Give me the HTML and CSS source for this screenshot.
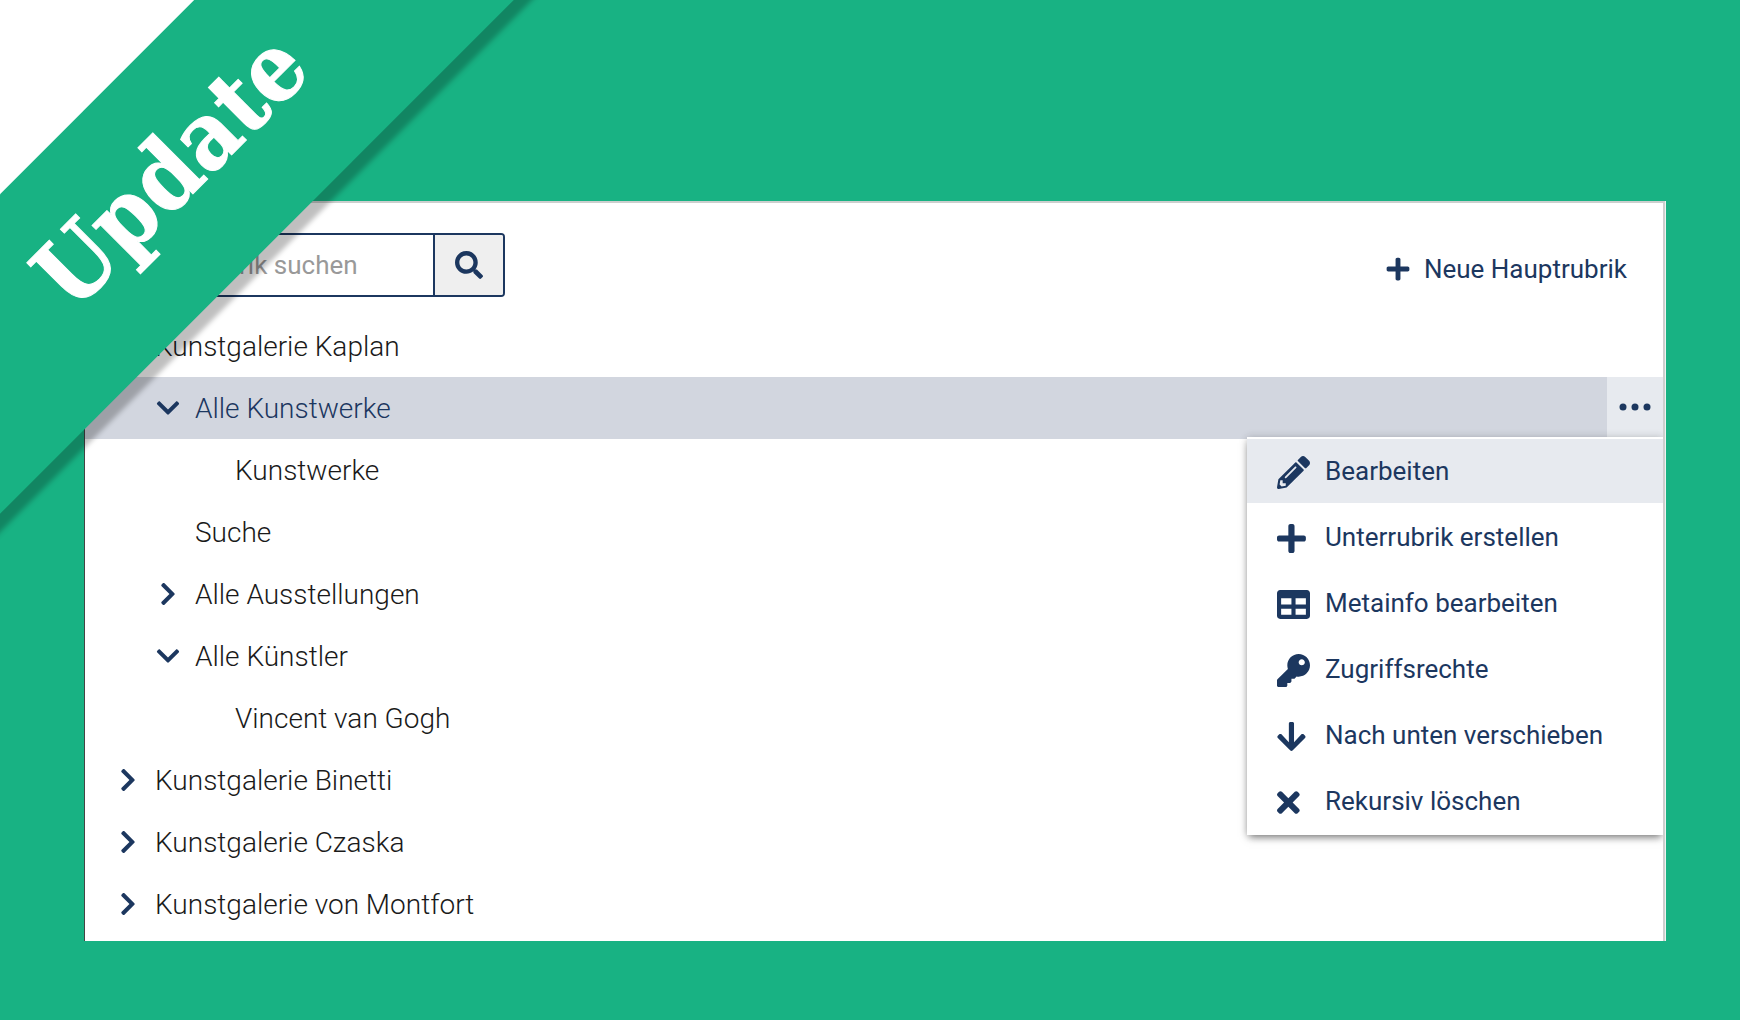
FILE: index.html
```
<!DOCTYPE html>
<html lang="de">
<head>
    <meta charset="UTF-8">
    <meta name="viewport" content="width=device-width, initial-scale=1.0">
    <title>Rubriken</title>
    <link rel="stylesheet" href="styles.css">
</head>
<body>
    <!-- shared icons -->
    <svg class="sprite" aria-hidden="true">
        <symbol id="down" viewBox="0 0 448 512"><path d="M207.029 381.476L12.686 187.132c-9.373-9.373-9.373-24.569 0-33.941l22.667-22.667c9.357-9.357 24.522-9.375 33.901-.04L224 284.505l154.745-154.021c9.379-9.335 24.544-9.317 33.901.04l22.667 22.667c9.373 9.373 9.373 24.569 0 33.941L240.971 381.476c-9.373 9.372-24.569 9.372-33.942 0z"/></symbol>
        <symbol id="right" viewBox="0 0 320 512"><path d="M285.476 272.971L91.132 467.314c-9.373 9.373-24.569 9.373-33.941 0l-22.667-22.667c-9.357-9.357-9.375-24.522-.04-33.901L188.505 256 34.484 101.255c-9.335-9.379-9.317-24.544.04-33.901l22.667-22.667c9.373-9.373 24.569-9.373 33.941 0L285.475 239.03c9.373 9.372 9.373 24.568.001 33.941z"/></symbol>
        <symbol id="plus" viewBox="0 0 448 512"><path d="M416 208H272V64c0-17.67-14.33-32-32-32h-32c-17.67 0-32 14.33-32 32v144H32c-17.67 0-32 14.33-32 32v32c0 17.67 14.33 32 32 32h144v144c0 17.67 14.33 32 32 32h32c17.67 0 32-14.33 32-32V304h144c17.67 0 32-14.33 32-32v-32c0-17.67-14.33-32-32-32z"/></symbol>
    </svg>

    <main class="panel">
        <div class="toolbar">
            <form class="search">
                <input type="text" class="search-input" placeholder="Nach Rubrik suchen" aria-label="Nach Rubrik suchen">
                <button type="button" class="search-button" aria-label="Suchen">
                    <svg viewBox="0 0 512 512"><path d="M505 442.7L405.3 343c-4.5-4.5-10.6-7-17-7H372c27.6-35.3 44-79.7 44-128C416 93.1 322.9 0 208 0S0 93.1 0 208s93.1 208 208 208c48.3 0 92.7-16.4 128-44v16.3c0 6.4 2.5 12.5 7 17l99.7 99.7c9.4 9.4 24.6 9.4 33.9 0l28.3-28.3c9.4-9.4 9.4-24.6.1-34zM208 336c-70.7 0-128-57.2-128-128 0-70.7 57.2-128 128-128 70.7 0 128 57.2 128 128 0 70.7-57.2 128-128 128z"/></svg>
                </button>
            </form>
            <button type="button" class="new-button">
                <svg><use href="#plus"/></svg>
                Neue Hauptrubrik
            </button>
        </div>

        <ul class="tree">
            <li class="row">
                <button type="button" class="toggle" aria-label="Zuklappen"><svg><use href="#down"/></svg></button>
                <a href="#">Kunstgalerie Kaplan</a>
            </li>
            <li class="row level-1 active">
                <button type="button" class="toggle" aria-label="Zuklappen"><svg><use href="#down"/></svg></button>
                <a href="#">Alle Kunstwerke</a>
                <button type="button" class="more" aria-label="Aktionen">
                    <svg viewBox="0 0 32 8"><circle cx="4" cy="4" r="3.5"/><circle cx="16" cy="4" r="3.5"/><circle cx="28" cy="4" r="3.5"/></svg>
                </button>
                <div class="menu">
                    <button type="button" class="menu-item selected">
                        <svg viewBox="0 0 512 512"><path d="M497.9 142.1l-46.1 46.1c-4.7 4.7-12.3 4.7-17 0l-111-111c-4.7-4.7-4.7-12.3 0-17l46.1-46.1c18.7-18.7 49.1-18.7 67.9 0l60.1 60.1c18.8 18.7 18.8 49.1 0 67.9zM284.2 99.8L21.6 362.4.4 483.9c-2.9 16.4 11.4 30.6 27.8 27.8l121.5-21.3 262.6-262.6c4.7-4.7 4.7-12.3 0-17l-111-111c-4.8-4.7-12.4-4.7-17.1 0zM124.1 339.9c-5.5-5.5-5.5-14.3 0-19.8l154-154c5.5-5.5 14.3-5.5 19.8 0s5.5 14.3 0 19.8l-154 154c-5.5 5.5-14.3 5.5-19.8 0zM88 424h48v36.3l-64.5 11.3-31.1-31.1L51.7 376H88v48z"/></svg>
                        Bearbeiten
                    </button>
                    <button type="button" class="menu-item">
                        <svg viewBox="0 0 512 512"><use href="#plus" width="448" height="512"/></svg>
                        Unterrubrik erstellen
                    </button>
                    <button type="button" class="menu-item">
                        <svg viewBox="0 0 512 512"><path d="M464 32H48C21.49 32 0 53.49 0 80v352c0 26.51 21.49 48 48 48h416c26.51 0 48-21.49 48-48V80c0-26.51-21.49-48-48-48zM224 416H64v-96h160v96zm0-160H64v-96h160v96zm224 160H288v-96h160v96zm0-160H288v-96h160v96z"/></svg>
                        Metainfo bearbeiten
                    </button>
                    <button type="button" class="menu-item">
                        <svg viewBox="0 0 512 512"><path d="M512 176.001C512 273.203 433.202 352 336 352c-11.22 0-22.19-1.062-32.827-3.069l-24.012 27.014A23.999 23.999 0 0 1 261.223 384H224v40c0 13.255-10.745 24-24 24h-40v40c0 13.255-10.745 24-24 24H24c-13.255 0-24-10.745-24-24v-78.059c0-6.365 2.529-12.47 7.029-16.971l161.802-161.802C163.108 213.814 160 195.271 160 176 160 78.798 238.797.001 335.999 0 433.488-.001 512 78.511 512 176.001zM336 128c0 26.51 21.49 48 48 48s48-21.49 48-48-21.49-48-48-48-48 21.49-48 48z"/></svg>
                        Zugriffsrechte
                    </button>
                    <button type="button" class="menu-item">
                        <svg viewBox="0 0 512 512"><path d="M413.1 222.5l22.2 22.2c9.4 9.4 9.4 24.6 0 33.9L241 473c-9.4 9.4-24.6 9.4-33.9 0L12.7 278.6c-9.4-9.4-9.4-24.6 0-33.9l22.2-22.2c9.5-9.5 25-9.3 34.3.4L184 343.4V56c0-13.3 10.7-24 24-24h32c13.3 0 24 10.7 24 24v287.4l114.8-120.5c9.3-9.8 24.8-10 34.3-.4z"/></svg>
                        Nach unten verschieben
                    </button>
                    <button type="button" class="menu-item">
                        <svg viewBox="0 0 512 512"><path d="M242.72 256l100.07-100.07c12.28-12.28 12.28-32.19 0-44.48l-22.24-22.24c-12.28-12.28-32.19-12.28-44.48 0L176 189.28 75.93 89.21c-12.28-12.28-32.19-12.28-44.48 0L9.21 111.45c-12.28 12.28-12.28 32.19 0 44.48L109.28 256 9.21 356.07c-12.28 12.28-12.28 32.19 0 44.48l22.24 22.24c12.28 12.28 32.2 12.28 44.48 0L176 322.72l100.07 100.07c12.28 12.28 32.2 12.28 44.48 0l22.24-22.24c12.28-12.28 12.28-32.19 0-44.48L242.72 256z"/></svg>
                        Rekursiv löschen
                    </button>
                </div>
            </li>
            <li class="row level-2"><a href="#">Kunstwerke</a></li>
            <li class="row level-1">
                <span class="toggle"></span>
                <a href="#">Suche</a>
            </li>
            <li class="row level-1">
                <button type="button" class="toggle" aria-label="Aufklappen"><svg><use href="#right"/></svg></button>
                <a href="#">Alle Ausstellungen</a>
            </li>
            <li class="row level-1">
                <button type="button" class="toggle" aria-label="Zuklappen"><svg><use href="#down"/></svg></button>
                <a href="#">Alle Künstler</a>
            </li>
            <li class="row level-2"><a href="#">Vincent van Gogh</a></li>
            <li class="row">
                <button type="button" class="toggle" aria-label="Aufklappen"><svg><use href="#right"/></svg></button>
                <a href="#">Kunstgalerie Binetti</a>
            </li>
            <li class="row">
                <button type="button" class="toggle" aria-label="Aufklappen"><svg><use href="#right"/></svg></button>
                <a href="#">Kunstgalerie Czaska</a>
            </li>
            <li class="row">
                <button type="button" class="toggle" aria-label="Aufklappen"><svg><use href="#right"/></svg></button>
                <a href="#">Kunstgalerie von Montfort</a>
            </li>
        </ul>
    </main>

    <div class="corner">
        <div class="ribbon">Update</div>
    </div>
</body>
</html>
```
FILE: styles.css
```
* {
    box-sizing: border-box;
}
body {
    margin: 0;
    padding: 201px 75px 79px 84px;
    font-family: Roboto, Arial, sans-serif;
    color: #1a1a1a;
    background-color: #18b283;
}
svg {
    fill: #1c375f;
}
button {
    margin: 0;
    padding: 0;
    border: none;
    background: none;
    font-family: inherit;
    font-size: 26px;
    color: #1c375f;
    cursor: pointer;
}
.sprite {
    display: none;
}
.panel {
    padding-bottom: 6px;
    background-color: white;
    border-top: 2px solid #cccfce;
    border-right: 2px solid #cccfce;
    border-left: 1px solid #444;
    box-shadow: 1px 0 0 #eef4f1;
}
.toolbar {
    display: flex;
    justify-content: space-between;
    padding: 30px 36px 18px 30px;
}
.search {
    display: flex;
    width: 390px;
    height: 64px;
    border: 2px solid #1c375f;
    border-radius: 4px;
    overflow: hidden;
}
.search-input {
    flex: 1;
    min-width: 0;
    padding: 0 10px;
    border: none;
    font-family: inherit;
    font-size: 26px;
}
.search-input::placeholder {
    color: #999;
}
.search-button {
    display: flex;
    align-items: center;
    justify-content: center;
    width: 70px;
    border-left: 2px solid #1c375f;
    background-color: #efefef;
}
.search-button svg {
    width: 28px;
    height: 28px;
}
.new-button {
    display: flex;
    align-items: center;
    gap: 14px;
    margin-top: 8px;
}
.new-button svg {
    width: 24px;
    height: 26px;
}
.tree {
    margin: 0;
    padding: 0;
    list-style: none;
}
.row {
    position: relative;
    display: flex;
    align-items: center;
    gap: 14px;
    height: 62px;
    padding-left: 30px;
}
.row a {
    flex: 1;
    font-size: 28px;
    font-weight: 300;
    color: inherit;
    text-decoration: none;
}
.level-1 {
    padding-left: 70px;
}
.level-2 {
    padding-left: 150px;
}
.active {
    background-color: #d2d6df;
    color: #1c375f;
}
.toggle {
    display: flex;
    justify-content: center;
    width: 26px;
}
.toggle svg {
    width: 26px;
    height: 26px;
}
.more {
    display: flex;
    align-items: center;
    justify-content: center;
    align-self: flex-start;
    width: 56px;
    height: 60px;
    background-color: #e7eaef;
}
.more svg {
    width: 32px;
    height: 8px;
}
/* action menu hangs from the active row */
.menu {
    position: absolute;
    top: 60px;
    right: 0;
    z-index: 2;
    width: 416px;
    padding-bottom: 2px;
    background-color: white;
    box-shadow: 0 4px 8px -2px rgba(0, 0, 0, 0.5), 0 0 8px rgba(0, 0, 0, 0.15);
    clip-path: inset(-12px 0 -16px -12px);
}
.menu-item {
    display: flex;
    align-items: center;
    gap: 15px;
    width: 100%;
    height: 66px;
    padding-left: 30px;
    border-top: 2px solid white;
}
.menu-item svg {
    width: 33px;
    height: 33px;
    margin-top: 3px;
}
.menu-item.selected {
    background-color: #e7eaef;
}
/* diagonal ribbon over the corner */
.corner {
    position: absolute;
    top: 0;
    left: 0;
    z-index: 3;
    width: 560px;
    height: 560px;
    overflow: hidden;
    background: linear-gradient(135deg, white 200px, transparent 200px);
    background-size: 280px 280px;
    background-repeat: no-repeat;
    pointer-events: none;
}
.ribbon {
    position: absolute;
    top: 64px;
    left: -223px;
    width: 800px;
    height: 226px;
    padding-bottom: 20px;
    background-color: #18b283;
    box-shadow: 0 13px 5px rgba(0, 0, 0, 0.25);
    color: white;
    font-family: "DejaVu Serif Condensed", "DejaVu Serif", serif;
    font-size: 94px;
    font-weight: bold;
    line-height: 206px;
    text-align: center;
    -webkit-text-stroke: 1px white;
    transform: rotate(-45deg);
}
```
